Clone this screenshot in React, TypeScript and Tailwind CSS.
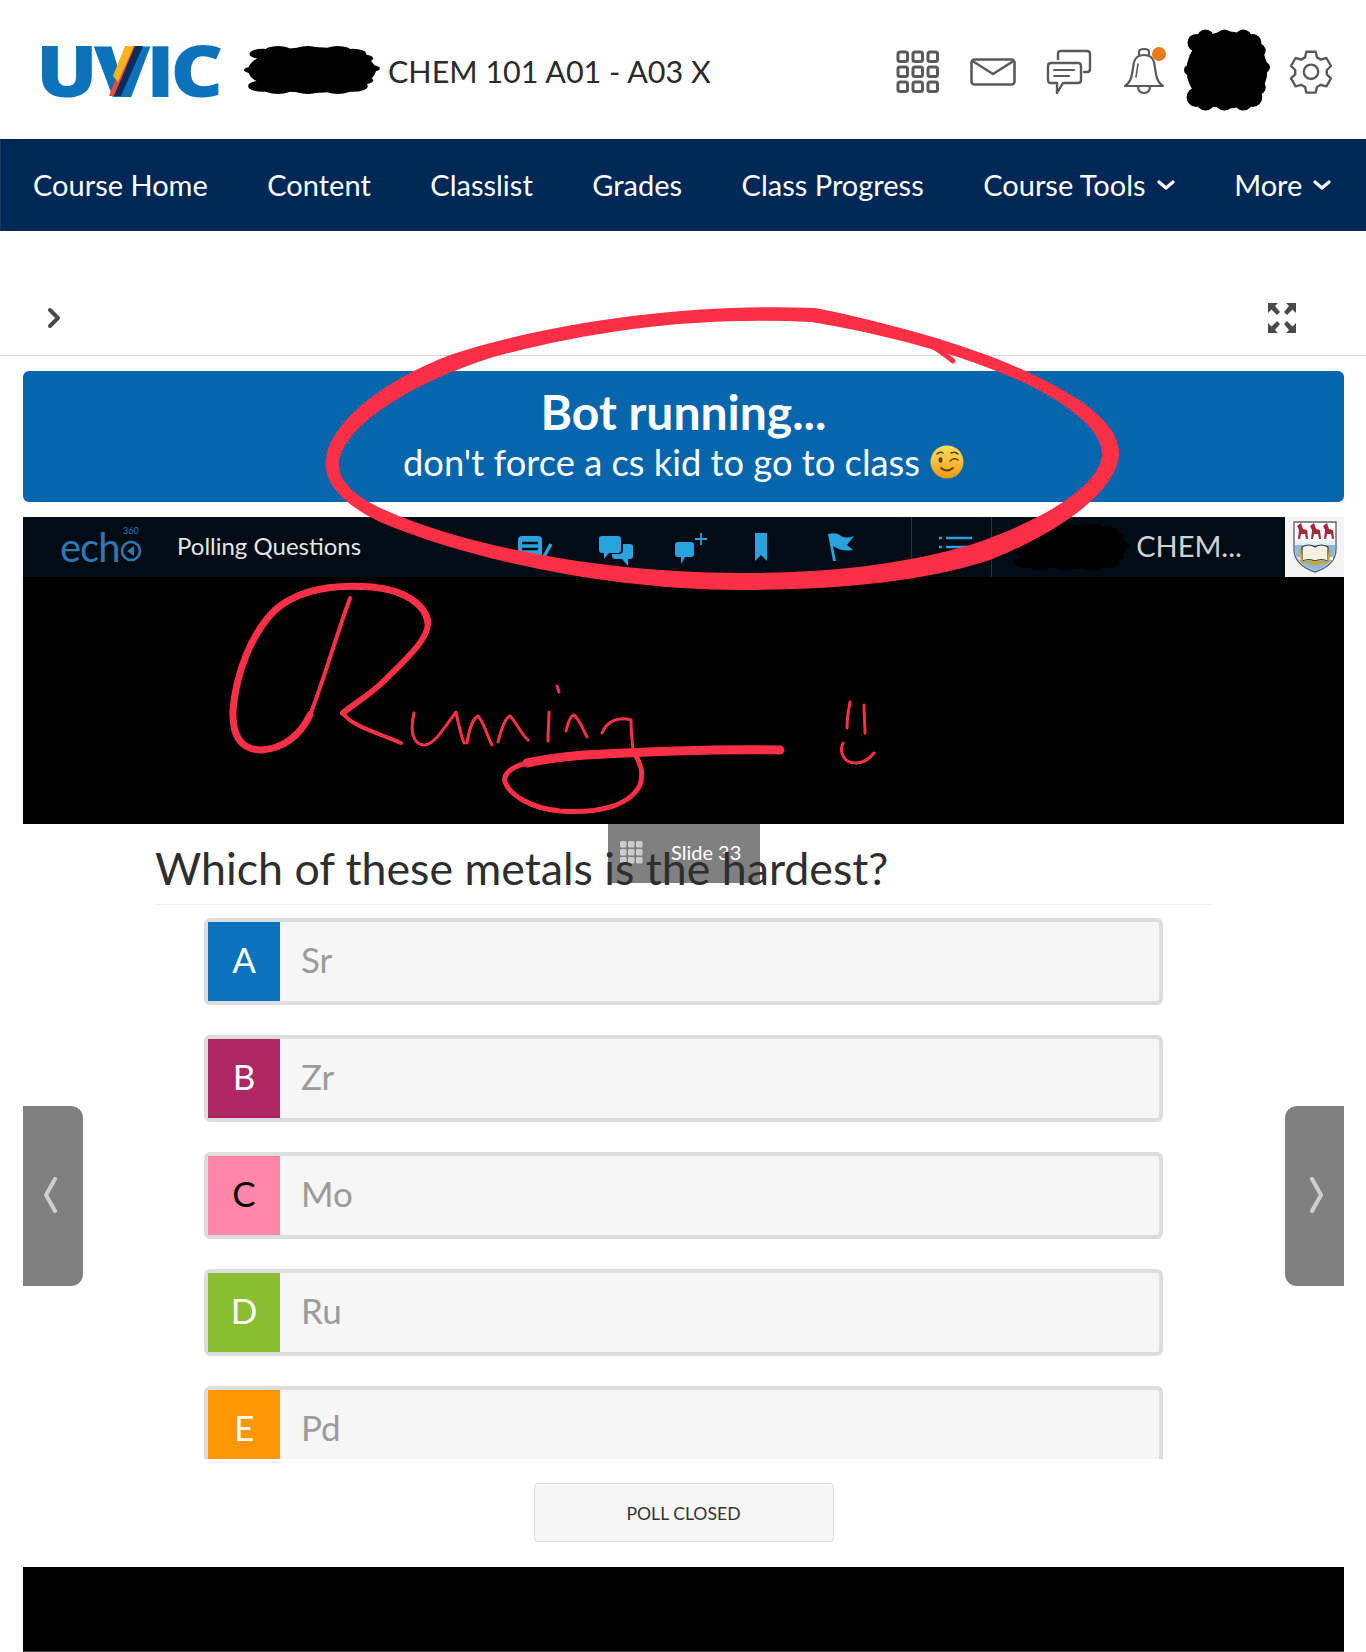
import React from "react";

const navItems = [
  { label: "Course Home" },
  { label: "Content" },
  { label: "Classlist" },
  { label: "Grades" },
  { label: "Class Progress" },
  { label: "Course Tools", caret: true },
  { label: "More", caret: true },
];

const options = [
  { key: "A", text: "Sr", color: "bg-[#0b72bd]", ink: "text-white" },
  { key: "B", text: "Zr", color: "bg-[#ae2760]", ink: "text-white" },
  { key: "C", text: "Mo", color: "bg-[#ff86a8]", ink: "text-black" },
  { key: "D", text: "Ru", color: "bg-[#8abd2f]", ink: "text-white" },
  { key: "E", text: "Pd", color: "bg-[#ff9705]", ink: "text-white" },
];

// scribbled-out censor marks
const Scribble = ({ className, fill = "#000" }: { className: string; fill?: string }) => (
  <svg className={className} viewBox="0 0 100 100" preserveAspectRatio="none">
    <ellipse cx="50" cy="50" rx="47" ry="44" fill={fill} />
    {[14, 25, 36, 47, 58, 69, 80].map((x, i) => (
      <g key={x}>
        <circle cx={x} cy={i % 2 ? 14 : 19} r="10" fill={fill} />
        <circle cx={x} cy={i % 2 ? 85 : 81} r="11" fill={fill} />
      </g>
    ))}
    <circle cx="6" cy="50" r="6" fill={fill} />
    <circle cx="94" cy="47" r="6" fill={fill} />
    <circle cx="87" cy="28" r="8" fill={fill} />
    <circle cx="87" cy="70" r="8" fill={fill} />
  </svg>
);

const Logo = () => (
  <div className="relative w-[178px] h-[52px] shrink-0 -mt-[5px]">
    <span className="block font-['Open_Sans',sans-serif] font-extrabold text-[70px] leading-[52px] tracking-[-3.5px] text-[#0c72bb] scale-x-[1.165] origin-left">
      UVIC
    </span>
    <svg className="absolute left-[64px] top-0" width="46" height="52" viewBox="0 0 46 52">
      <path d="M9 52 L14 52 L36 2 L29 2 Z" fill="#ef4d2e" />
      <path d="M13 32 L25 2 L34 2 L18 38 Z" fill="#f7b21d" />
      <path d="M14 52 L21 52 L43 2 L35 2 Z" fill="#0b2c5c" />
    </svg>
  </div>
);

const HeaderIcons = () => (
  <div className="flex items-center text-[#5a5a5a]">
    <svg className="w-[44px] h-[44px]" viewBox="0 0 44 44" fill="none" stroke="currentColor" strokeWidth="3">
      {[2, 17, 32].flatMap((x) =>
        [2, 17, 32].map((y) => <rect key={`${x}-${y}`} x={x} y={y} width="9.5" height="9.5" rx="2" />)
      )}
    </svg>
    <svg className="w-[46px] h-[28px] ml-[30px]" viewBox="0 0 46 28" fill="none" stroke="currentColor" strokeWidth="2.6" strokeLinejoin="round">
      <rect x="1.5" y="1.5" width="43" height="25" rx="3" />
      <path d="M2.5 3 L23 16 L43.5 3" />
    </svg>
    <svg className="w-[46px] h-[46px] ml-[30px]" viewBox="0 0 46 46" fill="none" stroke="currentColor" strokeWidth="2.4" strokeLinecap="round" strokeLinejoin="round">
      <path d="M12 10 V5 Q12 2 15 2 H41 Q44 2 44 5 V20 Q44 23 41 23 H38" />
      <path d="M5 14 H32 Q35 14 35 17 V31 Q35 34 32 34 H17 L11 44 V34 H5 Q2 34 2 31 V17 Q2 14 5 14 Z" />
      <path d="M8 21 H28 M8 27 H23" strokeWidth="2" />
    </svg>
    <svg className="relative w-[44px] h-[50px] ml-[30px]" viewBox="0 0 44 50" fill="none" stroke="currentColor" strokeWidth="2.2" strokeLinecap="round" strokeLinejoin="round">
      <path d="M3 39 Q9 35 10 27 L12 15 Q14 8 22 8 Q30 8 32 15 L34 27 Q35 35 41 39 Z" />
      <path d="M17 8 V5 Q17 2 22 2 Q27 2 27 5 V8" />
      <path d="M16 39 Q16 46 22 46 Q28 46 28 39" />
      <path d="M14 30 L16 17" strokeWidth="1.6" />
      <circle cx="37" cy="7" r="7" fill="#e87b1e" stroke="none" />
    </svg>
    <Scribble className="w-[86px] h-[88px] ml-[18px] -mt-[4px]" />
    <svg className="w-[48px] h-[48px] ml-[17px]" viewBox="0 0 24 24" fill="none" stroke="currentColor" strokeWidth="1.2" strokeLinecap="round" strokeLinejoin="round">
      <path d="M9.7 1.9 h4.6 l.7 2.8 1.9 1.1 2.8-.8 2.3 4 -2.1 2 v2.2 l2.1 2 -2.3 4 -2.8-.8 -1.9 1.1 -.7 2.8 h-4.6 l-.7-2.8 -1.9-1.1 -2.8.8 -2.3-4 2.1-2 v-2.2 l-2.1-2 2.3-4 2.8.8 1.9-1.1 Z" />
      <circle cx="12" cy="11.9" r="3.6" />
    </svg>
  </div>
);

const Caret = () => (
  <svg className="w-[18px] h-[10px] ml-[11px]" viewBox="0 0 18 10" fill="none" stroke="white" strokeWidth="3.2" strokeLinecap="round" strokeLinejoin="round">
    <path d="M2 2 L9 8 L16 2" />
  </svg>
);

const EchoIcons = () => (
  <div className="flex items-center text-[#29a3dd]">
    <svg className="w-[36px] h-[30px] ml-[157px] mt-[4px]" viewBox="0 0 36 30" fill="currentColor">
      <rect x="0" y="2" width="24" height="24" rx="4" />
      <path d="M4 9 H20 M4 15 H20 M4 21 H14" stroke="#020c14" strokeWidth="2.4" />
      <path d="M24 26 L33 10" stroke="currentColor" strokeWidth="3.5" />
    </svg>
    <svg className="w-[36px] h-[32px] ml-[44px] mt-[8px]" viewBox="0 0 36 32" fill="currentColor">
      <path d="M4 1 H20 Q23 1 23 4 V15 Q23 18 20 18 H11 L6 24 V18 H4 Q1 18 1 15 V4 Q1 1 4 1 Z" />
      <path d="M25 9 H32 Q35 9 35 12 V21 Q35 24 32 24 H30 V31 L24 24 H17 Q14 24 14 21 V19 H21 Q25 19 25 15 Z" />
    </svg>
    <svg className="w-[34px] h-[32px] ml-[40px] mt-[4px]" viewBox="0 0 34 32" fill="currentColor">
      <path d="M4 9 H17 Q20 9 20 12 V21 Q20 24 17 24 H11 L7 31 V24 H4 Q1 24 1 21 V12 Q1 9 4 9 Z" />
      <path d="M27 0 V12 M21 6 H33" stroke="currentColor" strokeWidth="1.8" />
    </svg>
    <svg className="w-[14px] h-[30px] ml-[46px]" viewBox="0 0 14 30" fill="currentColor">
      <path d="M1 1 H13 V29 L7 23 L1 29 Z" />
    </svg>
    <svg className="w-[30px] h-[30px] ml-[57px]" viewBox="0 0 30 30" fill="currentColor">
      <path d="M3 2 Q12 0 16 4 Q21 7 29 4 L22 13 L28 18 Q17 20 8 14 L11 29 H8 Z" />
    </svg>
    <div className="ml-[56px] h-[60px] w-[81px] flex items-center border-x border-[#2a3138]">
      <svg className="w-[33px] h-[24px] ml-[27px]" viewBox="0 0 33 24" stroke="currentColor" strokeWidth="2.4">
        <path d="M7 3 H33 M7 12 H31 M7 21 H26" />
        <path d="M0 3 H3 M0 12 H3 M0 21 H3" />
      </svg>
    </div>
  </div>
);

const Crest = () => (
  <svg className="w-[44px] h-[52px]" viewBox="0 0 44 52">
    <path d="M1 1 H43 V28 Q43 44 22 51 Q1 44 1 28 Z" fill="#fff" stroke="#5c6670" strokeWidth="1.4" />
    <path d="M2 20 H42 V28 Q42 43 22 50 Q2 43 2 28 Z" fill="#8fb8dc" />
    <path d="M2 20 H42 V24 H2 Z M4 36 H40 V39 H6 Z" fill="#e7eef5" />
    {[4, 17, 30].map((x) => (
      <path key={x} d="M1 17 L2 8 L0 4 L4 1 L6 7 L10 8 L11 17 H9 L8 12 H4 L3 17 Z" transform={`translate(${x} 1)`} fill="#a7283a" />
    ))}
    <path d="M9 26 Q16 22 22 26 Q28 22 35 26 V40 Q28 37 22 40 Q16 37 9 40 Z" fill="#f5f0df" stroke="#2f3b46" strokeWidth="1.2" />
    <path d="M7 28 L9 41 H35 L37 28" fill="none" stroke="#caa23e" strokeWidth="2" />
    <path d="M14 42 Q22 47 30 42 L22 40 Z" fill="#d0a43a" />
  </svg>
);

const Emoji = () => (
  <svg className="w-[34px] h-[34px] ml-[10px]" viewBox="0 0 34 34">
    <defs>
      <linearGradient id="face" x1="0" y1="0" x2="0" y2="1">
        <stop offset="0" stopColor="#fde15e" />
        <stop offset="1" stopColor="#f19a15" />
      </linearGradient>
    </defs>
    <circle cx="17" cy="17" r="16.5" fill="url(#face)" />
    <ellipse cx="10.5" cy="15" rx="2" ry="2.8" fill="#5b3a14" />
    <path d="M20 16 Q24 12 28 15 M7 9 Q10 6 13 8 M21 8 Q25 6 28 9" fill="none" stroke="#5b3a14" strokeWidth="1.5" strokeLinecap="round" />
    <path d="M11 23 Q17 28 23 23" fill="none" stroke="#5b3a14" strokeWidth="1.8" strokeLinecap="round" />
  </svg>
);

const RedInk = () => (
  <svg className="absolute left-0 top-0 pointer-events-none z-20" width="1366" height="830" viewBox="0 0 1366 830">
    <path
      fillRule="evenodd"
      fill="#fb3047"
      d="M815 308 C900 325 985 350 1040 378 C1095 405 1120 430 1119 455 C1116 490 1065 530 990 560 C920 583 830 590 740 590 C610 590 470 560 380 522 C340 503 322 480 326 458 C332 420 385 380 450 355 C550 322 690 303 815 308 Z M811 322 C700 316 590 330 490 358 C410 384 345 425 339 462 C337 480 355 497 385 510 C470 548 610 573 740 573 C830 573 900 565 970 545 C1045 520 1100 485 1102 455 C1103 435 1080 412 1035 388 C975 358 890 335 811 322 Z"
    />
    <path d="M922 340 Q940 350 953 361" fill="none" stroke="#fb3047" strokeWidth="5" strokeLinecap="round" />
    <g fill="none" stroke="#fb3047" strokeLinecap="round" strokeLinejoin="round">
      <path strokeWidth="7" d="M428 623 C426 605 405 590 372 587 C335 584 300 588 275 610 C250 635 236 675 233 710 C232 735 240 750 262 750 C285 748 300 735 310 715" />
      <path strokeWidth="4" d="M310 715 C322 685 335 640 350 598" />
      <path strokeWidth="6" d="M428 623 C428 640 405 660 385 680 C370 695 355 703 343 713" />
      <path strokeWidth="4" d="M343 713 C350 725 375 732 401 743" />
      <path strokeWidth="3" d="M414 713 C410 730 412 745 425 745 C436 743 446 725 456 712 C458 722 461 735 464 743 M467 743 C469 730 473 718 478 716 C484 722 488 738 492 745 M498 742 C501 730 505 718 510 716 C516 722 522 735 528 740" />
      <path strokeWidth="3" d="M549 712 C549 720 548 732 548 741 M557 686 L559 692 M566 731 C568 722 570 716 574 715 C580 720 583 730 587 737 M602 733 C606 722 618 716 631 720 C631 730 632 740 633 750" />
      <path strokeWidth="9" d="M780 750 C720 749 640 752 585 755 C560 757 540 760 527 763" />
      <path strokeWidth="5" d="M527 763 C510 767 503 775 505 782 C510 795 530 808 560 811 C600 814 630 805 640 785 C645 770 638 760 633 750" />
      <path strokeWidth="3" d="M850 702 C848 712 847 720 847 728 M864 705 C864 715 865 725 865 733 M843 743 C839 752 843 763 856 763 C864 763 870 758 874 753" />
    </g>
  </svg>
);

export default function App() {
  return (
    <div className="relative w-[1366px] h-[1652px] overflow-hidden bg-white font-['Lato',sans-serif]">
      <header className="h-[139px] flex items-center pl-[36px] pr-[31px] pt-[5px]">
        <Logo />
        <Scribble className="w-[136px] h-[52px] ml-[30px] shrink-0 -mt-[5px]" />
        <span className="ml-[8px] text-[30.5px] text-[#2b2b2b] whitespace-nowrap">CHEM 101 A01 - A03 X</span>
        <div className="ml-auto"><HeaderIcons /></div>
      </header>

      <nav className="h-[92px] flex items-center gap-[59.5px] pl-[32px] bg-[#002856] border-l border-[#1a3a60] text-[29px] text-white whitespace-nowrap">
        {navItems.map((item) => (
          <div key={item.label} className="flex items-center">
            {item.label}
            {item.caret && <Caret />}
          </div>
        ))}
      </nav>

      <div className="h-[125px] flex items-center justify-between pl-[47px] pr-[70px] pt-[50px] border-b border-[#d6d6d6]">
        <svg className="w-[14px] h-[22px]" viewBox="0 0 14 22" fill="none" stroke="#4a4a4a" strokeWidth="4" strokeLinecap="round" strokeLinejoin="round">
          <path d="M3 3 L11 11 L3 19" />
        </svg>
        <svg className="w-[28px] h-[30px]" viewBox="0 0 28 30" fill="#4a4a4a">
          <path d="M0 0 H10 L7 3 L12 9 L9 12 L3.5 6.5 L0 10 Z M28 0 H18 L21 3 L16 9 L19 12 L24.5 6.5 L28 10 Z M0 30 H10 L7 27 L12 21 L9 18 L3.5 23.5 L0 20 Z M28 30 H18 L21 27 L16 21 L19 18 L24.5 23.5 L28 20 Z" />
        </svg>
      </div>

      <main className="pl-[23px] pr-[22px] pt-[15px]">
        <section className="h-[131px] rounded-[6px] bg-[#0565ad] flex flex-col items-center justify-center text-white">
          <h1 className="font-bold text-[48px] leading-[50px] -mt-[3px]">Bot running...</h1>
          <p className="flex items-center text-[36.3px] leading-[44px] mt-[3px]">
            don't force a cs kid to go to class
            <Emoji />
          </p>
        </section>

        <section className="mt-[15px] h-[307px] bg-black">
          <div className="h-[60px] flex items-center bg-[#020c14]">
            <div className="w-[154px] pl-[37px] flex items-center text-[#2f78b5] relative">
              <span className="text-[40px] font-normal leading-none tracking-[-1px]">ech</span>
              <svg className="w-[22px] h-[22px] mt-[8px]" viewBox="0 0 22 22" fill="none" stroke="#2f78b5" strokeWidth="2.6">
                <circle cx="11" cy="11" r="9" />
                <path d="M14 6 V16 L7 11 Z" fill="#2f78b5" stroke="none" />
              </svg>
              <span className="absolute left-[100px] top-[-3px] text-[9px]">360</span>
            </div>
            <span className="text-[24px] text-[#e2e6e8] whitespace-nowrap -mt-[2px]">Polling Questions</span>
            <EchoIcons />
            <Scribble className="w-[120px] h-[50px] ml-[18px]" />
            <span className="ml-[6px] text-[29px] text-[#cfd3d6] -mt-[2px]">CHEM...</span>
            <div className="ml-auto h-[60px] w-[59px] bg-[#f4f4f4] flex items-center justify-center">
              <Crest />
            </div>
          </div>
        </section>

        <section className="relative mx-[132px] h-[81px] flex items-end pb-[8px] border-b border-[#eeeeee]">
          <div className="absolute left-[453px] top-0 w-[152px] h-[59px] bg-[#808080] flex items-start pt-[16px] pl-[11px] gap-[27px]">
            <svg className="w-[25px] h-[25px]" viewBox="0 0 25 25" fill="#cccccc">
              {[1, 9, 17].flatMap((x) => [1, 9, 17].map((y) => <rect key={`${x}${y}`} x={x} y={y} width="6.5" height="6.5" rx="1.5" />))}
            </svg>
            <span className="text-[20px] leading-[25px] text-white">Slide 33</span>
          </div>
          <h2 className="relative text-[44.7px] leading-[56px] text-[#2e2e2e] whitespace-nowrap">Which of these metals is the hardest?</h2>
        </section>

        <section className="h-[554px] mx-[181px] pt-[13px] overflow-hidden flex flex-col gap-[30px]">
          {options.map((o) => (
            <div key={o.key} className="shrink-0 h-[87px] flex rounded-[6px] border-4 border-[#dddddd] bg-[#f6f6f6]">
              <div className={`w-[72px] flex items-center justify-center pb-[4px] text-[35px] ${o.color} ${o.ink}`}>{o.key}</div>
              <div className="pl-[21px] flex items-center pb-[4px] text-[35px] text-[#9b9b9b]">{o.text}</div>
            </div>
          ))}
        </section>

        <div className="mt-[24px] mx-auto w-[300px] h-[59px] rounded-[4px] border border-[#dddddd] bg-[#f7f7f7] flex items-center justify-center pt-[4px] text-[17.6px] text-[#333333]">
          POLL CLOSED
        </div>
        <div className="mt-[25px] h-[85px] bg-black border-b border-[#444444]" />
      </main>

      <button className="absolute left-[23px] top-[1106px] w-[60px] h-[180px] bg-[#808080] rounded-r-[12px] flex items-center justify-start pl-[21px]">
        <svg className="w-[13px] h-[36px] -mt-[3px]" viewBox="0 0 13 36" fill="none" stroke="#cfcfcf" strokeWidth="4" strokeLinecap="round" strokeLinejoin="round"><path d="M11 2 L2 18 L11 34" /></svg>
      </button>
      <button className="absolute left-[1285px] top-[1106px] w-[59px] h-[180px] bg-[#808080] rounded-l-[12px] flex items-center justify-end pr-[21px]">
        <svg className="w-[13px] h-[36px] -mt-[3px]" viewBox="0 0 13 36" fill="none" stroke="#cfcfcf" strokeWidth="4" strokeLinecap="round" strokeLinejoin="round"><path d="M2 2 L11 18 L2 34" /></svg>
      </button>

      <RedInk />
    </div>
  );
}
